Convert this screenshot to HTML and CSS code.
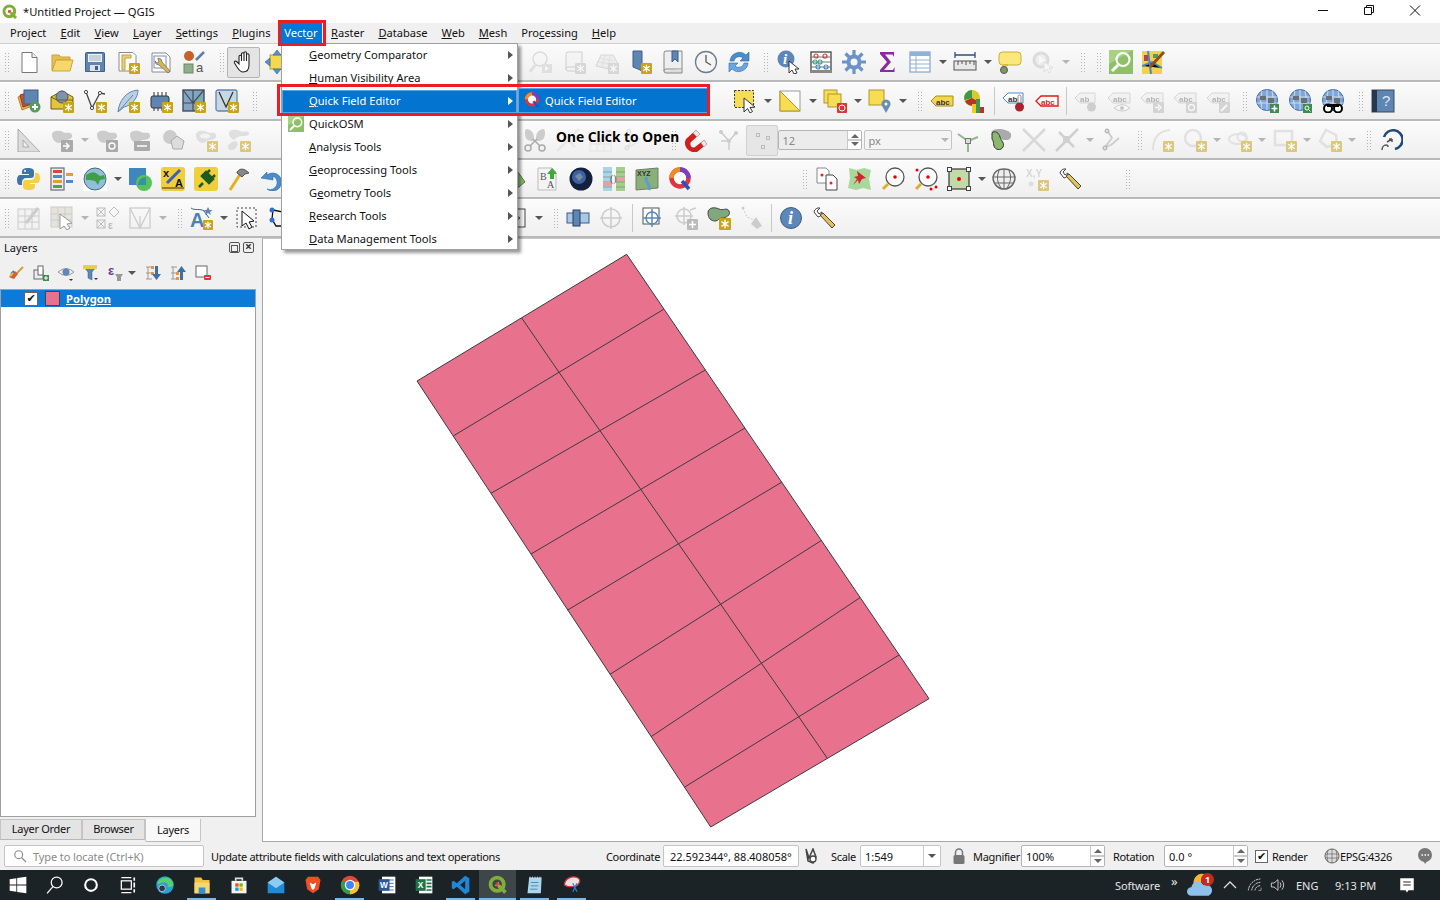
FILE: index.html
```html
<!DOCTYPE html>
<html lang="en">
<head>
    <meta charset="UTF-8">
    <title>*Untitled Project — QGIS</title>
    <link rel="stylesheet" href="styles.css">
</head>
<body>
<!-- icon sprite -->
<svg class="sprite" xmlns="http://www.w3.org/2000/svg">
    <symbol id="bdg" viewBox="0 0 10 10"><rect width="10" height="10" rx="1" fill="#c9a31a"/><path d="M5 1.5v7M2 3l6 4M8 3l-6 4" stroke="#fff" stroke-width="1.2"/></symbol>
    <symbol id="qgis" viewBox="0 0 24 24"><circle cx="11" cy="11" r="8" fill="none" stroke="#7fae3c" stroke-width="4.5"/><path d="M13 13l8 8" stroke="#7fae3c" stroke-width="4.5"/><path d="M8 13l5-5 1 6z" fill="#e8a33d"/><circle cx="11" cy="11" r="2" fill="#d9482b"/></symbol>

    <symbol id="page" viewBox="0 0 24 24"><path d="M5 2.5h10l5 5v15H5z" fill="#fff" stroke="#777"/><path d="M15 2.5v5h5" fill="#eee" stroke="#777"/></symbol>
    <symbol id="folder" viewBox="0 0 24 24"><path d="M2 20V5h7l2 2h9v3H7z" fill="#e6c04e" stroke="#c9a33a"/><path d="M2 21l4-11h17l-3 11z" fill="#f5d76a" stroke="#c9a33a"/></symbol>
    <symbol id="save" viewBox="0 0 24 24"><path d="M2.5 3.5a1 1 0 0 1 1-1h17a1 1 0 0 1 1 1v18h-19z" fill="#5f86b3" stroke="#3d5f88"/><rect x="5" y="4" width="14" height="8" fill="#eef1f4"/><path d="M6 6h12M6 8h12M6 10h12" stroke="#9fb0c2"/><rect x="7" y="15" width="10" height="6" fill="#dfe3e8"/><rect x="12" y="16" width="3" height="4" fill="#3d5f88"/></symbol>
    <symbol id="saveas" viewBox="0 0 24 24"><path d="M3 2.500h14l3 3V21H3z" fill="#fff" stroke="#8a8a8a"/><path d="M6 5h9v3H9v12H6z" fill="#e9cf7e" stroke="#c4a23d"/><use href="#bdg" x="13" y="13" width="11" height="11"/></symbol>
    <symbol id="layoutm" viewBox="0 0 24 24"><path d="M3 3h14l4 4v15H3z" fill="#fff" stroke="#8a8a8a"/><rect x="5" y="6" width="12" height="12" fill="none" stroke="#6f8fc0"/><path d="M9 8l3 1 1 3 8 9-2 2-9-8-3-1-1-3 2 2 2-1-1-3z" fill="#d9b64c" stroke="#666" stroke-width=".7"/></symbol>
    <symbol id="styleman" viewBox="0 0 24 24"><circle cx="7" cy="6" r="5" fill="#c8602a"/><path d="M14 10L22 2" stroke="#5a7fa8" stroke-width="2.500"/><rect x="2" y="14" width="9" height="9" fill="#8fae8a" stroke="#6b8a66"/><text x="14" y="22" class="ia">a</text></symbol>
    <symbol id="hand" viewBox="0 0 24 24"><path d="M7 14V6.500a1.200 1.200 0 0 1 2.500 0V11 4a1.200 1.200 0 0 1 2.500 0v7-8a1.200 1.200 0 0 1 2.500 0v8-6a1.200 1.200 0 0 1 2.500 0v10c0 4-2 7-6 7-3 0-4-2-6-5l-2.500-4c-.7-1.500 1-2.500 2-1.500z" fill="#fff" stroke="#222" stroke-width="1.100"/></symbol>
    <symbol id="pansel" viewBox="0 0 24 24"><rect x="5" y="5" width="14" height="14" fill="#f2d94e" stroke="#b79e2a"/><path d="M12 0l4 5H8zM12 24l-4-5h8zM0 12l5-4v8zM24 12l-5 4V8z" fill="#5d8fc9" stroke="#36618f" stroke-width=".6"/></symbol>
    <symbol id="zoomlast" viewBox="0 0 24 24"><circle cx="11" cy="9" r="7" fill="#f4f4f4" stroke="#aaa" stroke-width="1.500"/><path d="M6 15l-5 7" stroke="#c9b98a" stroke-width="3"/><rect x="13" y="14" width="10" height="9" fill="#bbb"/><path d="M16 16l4 2.500-4 2.500z" fill="#fff"/></symbol>
    <symbol id="newmap" viewBox="0 0 24 24"><path d="M4 4a2 2 0 0 1 2-2h14v15H6a2 2 0 0 0-2 2z" fill="#eee" stroke="#888"/><path d="M4 19a2 2 0 0 0 2 2h8" fill="none" stroke="#888"/><use href="#bdg" x="13" y="13" width="11" height="11"/></symbol>
    <symbol id="map3d" viewBox="0 0 24 24"><path d="M1 16l5-11h12l5 9-9 5z" fill="#ddd" stroke="#999"/><path d="M5 8l13 3M3 12l14 2M10 5L7 17M15 5l-2 13" stroke="#aaa" stroke-width=".7"/><use href="#bdg" x="13" y="13" width="11" height="11"/></symbol>
    <symbol id="bmknew" viewBox="0 0 24 24"><path d="M5 1h9v15l4 4v3l-8-4-5-2z" fill="#5f86b3" stroke="#3d5f88"/><use href="#bdg" x="13" y="13" width="11" height="11"/></symbol>
    <symbol id="bmkshow" viewBox="0 0 24 24"><path d="M3 3a2 2 0 0 1 2-2h16v18H5a2 2 0 0 0-2 2z" fill="#eee" stroke="#888"/><path d="M3 21a2 2 0 0 0 2 2h16v-4" fill="#ddd" stroke="#888"/><path d="M11 1h6v11l-3-3-3 3z" fill="#5f86b3" stroke="#3d5f88"/></symbol>
    <symbol id="clock" viewBox="0 0 24 24"><circle cx="12" cy="12" r="10.500" fill="#f4f4f4" stroke="#6c7c8c" stroke-width="1.300"/><path d="M12 5v7l5 3" fill="none" stroke="#555" stroke-width="1.300"/></symbol>
    <symbol id="refresh" viewBox="0 0 24 24"><path d="M3 11a9.500 9.500 0 0 1 16-6l3-3v9h-9l3-3a5.500 5.500 0 0 0-9 3z" fill="#4a8ccc" stroke="#2d69a5" stroke-width=".6"/><path d="M21 13a9.500 9.500 0 0 1-16 6l-3 3v-9h9l-3 3a5.500 5.500 0 0 0 9-3z" fill="#6aa7df" stroke="#2d69a5" stroke-width=".6"/></symbol>
    <symbol id="identify" viewBox="0 0 24 24"><circle cx="10" cy="9" r="8.500" fill="#5c87b8"/><text x="7" y="14" class="ii">i</text><path d="M13 11v12l3-3 2 4 3-1-2-4h4z" fill="#fff" stroke="#222" stroke-width=".9"/></symbol>
    <symbol id="abacus" viewBox="0 0 24 24"><rect x="2" y="2" width="20" height="19" fill="#fff" stroke="#444" stroke-width="1.300"/><rect x="1" y="20" width="22" height="3" fill="#888"/><path d="M2 7h20M2 12h20M2 17h20" stroke="#777"/><g fill="none" stroke-width="1.200"><circle cx="7" cy="6" r="2" stroke="#c44"/><circle cx="16" cy="6" r="2" stroke="#c44"/><circle cx="11" cy="12" r="2" stroke="#3a8"/><circle cx="6" cy="12" r="2" stroke="#3a8"/><circle cx="9" cy="17" r="2" stroke="#48c"/><circle cx="17" cy="17" r="2" stroke="#48c"/></g></symbol>
    <symbol id="gear" viewBox="0 0 24 24"><circle cx="12" cy="12" r="5.500" fill="none" stroke="#6c93c9" stroke-width="4"/><path d="M12 0v6M12 18v6M0 12h6M18 12h6M3.500 3.500l4 4M16.500 16.500l4 4M20.500 3.500l-4 4M7.500 16.500l-4 4" stroke="#6c93c9" stroke-width="3.200"/></symbol>
    <symbol id="sigma" viewBox="0 0 24 24"><path d="M5 2h14v5l-1.500-2.500H10l6 7.500-7 8h9l1.500-3v5H5v-2l7-8-7-8z" fill="#8a2a9e"/></symbol>
    <symbol id="table" viewBox="0 0 24 24"><rect x="2" y="2" width="20" height="20" fill="#fff" stroke="#6a93c0"/><rect x="2" y="2" width="20" height="4" fill="#8fb2d6"/><path d="M2 10h20M2 14h20M2 18h20M8 6v16" stroke="#8fb2d6"/></symbol>
    <symbol id="ruler" viewBox="0 0 24 24"><path d="M2 5h20M2 2v6M22 2v6" stroke="#2f4f78" stroke-width="1.300"/><rect x="1" y="11" width="22" height="9" fill="#e8e8e8" stroke="#555"/><path d="M5 11v4M9 11v3M13 11v4M17 11v3M21 11v4" stroke="#555"/></symbol>
    <symbol id="note" viewBox="0 0 24 24"><rect x="1" y="2" width="22" height="13" rx="3.500" fill="#fbe87a" stroke="#c7ae3a"/><path d="M5 15l-1 4 6-4z" fill="#fbe87a" stroke="#c7ae3a"/><circle cx="6" cy="20" r="3.500" fill="#7e9a5a" stroke="#556"/></symbol>
    <symbol id="playgear" viewBox="0 0 24 24"><circle cx="10" cy="10" r="7" fill="#ddd" stroke="#aaa" stroke-width="3"/><path d="M8 6l6 4-6 4z" fill="#fff"/><path d="M13 12v10l3-3 2 4 2-1-2-4h4z" fill="#fff" stroke="#bbb"/></symbol>
    <symbol id="osm" viewBox="0 0 24 24"><rect width="24" height="24" fill="#8fc067"/><path d="M24 0H0v14z" fill="#a6d283"/><circle cx="14" cy="9.500" r="6.500" fill="none" stroke="#fff" stroke-width="2.200"/><path d="M9 15l-6 6" stroke="#fff" stroke-width="3"/></symbol>
    <symbol id="mapedit" viewBox="0 0 24 24"><rect y="1" width="20" height="23" fill="#f2d24b"/><path d="M0 16l10-4 10 6M6 1l3 23" stroke="#4a86c8" stroke-width="2"/><rect x="2" y="5" width="4" height="6" fill="#b0455a"/><rect x="11" y="4" width="5" height="4" fill="#5a9a5a"/><path d="M8 17L22 2" stroke="#9a4a20" stroke-width="3"/></symbol>

    <symbol id="dsm" viewBox="0 0 24 24"><path d="M1 8l11-4 3 13-10 4z" fill="#e8b24c" stroke="#b9822a"/><path d="M3 6l10-3 2 12-9 3z" fill="#c4553a" stroke="#96371f"/><rect x="7" y="1" width="14" height="14" fill="#5f86b3" stroke="#3d5f88"/><circle cx="18" cy="18" r="5.500" fill="#5a9a5a"/><path d="M18 15v6M15 18h6" stroke="#fff" stroke-width="2"/></symbol>
    <symbol id="gpkg" viewBox="0 0 24 24"><path d="M1 8l11-6 11 6v12H1z" fill="#e3c53c" stroke="#6e5f14"/><circle cx="12" cy="8" r="6" fill="#7d93ad" stroke="#556"/><path d="M1 8l6 3h16" fill="none" stroke="#6e5f14"/><use href="#bdg" x="13" y="13" width="11" height="11"/></symbol>
    <symbol id="vnew" viewBox="0 0 24 24"><path d="M3 3l6 16 8-15 5 1" fill="none" stroke="#444" stroke-width="1.300"/><g fill="#fff" stroke="#444"><circle cx="3" cy="3" r="1.600"/><circle cx="9" cy="19" r="1.600"/><circle cx="17" cy="4" r="1.600"/></g><use href="#bdg" x="13" y="13" width="11" height="11"/></symbol>
    <symbol id="feather" viewBox="0 0 24 24"><path d="M2 23C3 12 10 2 22 1c0 7-5 15-14 17z" fill="#bcd0e4" stroke="#5f86b3"/><path d="M2 23L17 6" stroke="#5f86b3"/><use href="#bdg" x="13" y="13" width="11" height="11"/></symbol>
    <symbol id="chip" viewBox="0 0 24 24"><rect x="2" y="7" width="18" height="12" rx="2" fill="#5f86b3" stroke="#333"/><path d="M5 3v4M9 3v4M13 3v4M17 3v4M5 19v3M9 19v3M13 19v3" stroke="#333"/><use href="#bdg" x="13" y="13" width="11" height="11"/></symbol>
    <symbol id="mesh" viewBox="0 0 24 24"><rect x="1" y="1" width="21" height="21" fill="#86a3bf" stroke="#3f4f60" stroke-width="1.400"/><path d="M1 14h21M11 14V1M11 14v8M1 1l10 13 11-13" fill="none" stroke="#3f4f60" stroke-width="1.200"/><use href="#bdg" x="13" y="13" width="11" height="11"/></symbol>
    <symbol id="meshv" viewBox="0 0 24 24"><rect x="1" y="1" width="21" height="21" rx="2" fill="#c9d6e3" stroke="#5f86b3" stroke-width="1.300"/><path d="M4 3l7 15 7-15" fill="none" stroke="#333" stroke-width="1.300"/><use href="#bdg" x="13" y="13" width="11" height="11"/></symbol>
    <symbol id="selbox" viewBox="0 0 24 24"><rect x="1.500" y="1.500" width="19" height="17" fill="#f6dd52" stroke="#333" stroke-dasharray="2 1.500"/><path d="M11 9v14l3.500-3.500 2.500 4.500 2.500-1.500-2.500-4 5-.5z" fill="#fff" stroke="#333"/></symbol>
    <symbol id="seldiag" viewBox="0 0 24 24"><rect x="2" y="2" width="20" height="20" fill="#fff" stroke="#999"/><path d="M2 2l20 20H2z" fill="#f6dd52" stroke="#b0962a"/></symbol>
    <symbol id="seldel" viewBox="0 0 24 24"><rect x="1" y="1" width="13" height="13" fill="#f6dd52" stroke="#b0962a"/><rect x="5" y="5" width="13" height="13" fill="#f6dd52" stroke="#b0962a"/><rect x="14" y="14" width="10" height="10" rx="1" fill="#d33"/><circle cx="19" cy="19" r="3" fill="none" stroke="#fff"/></symbol>
    <symbol id="selpin" viewBox="0 0 24 24"><rect x="1" y="1" width="15" height="15" fill="#f6dd52" stroke="#b0962a"/><path d="M18 24l-4-7a4.500 4.500 0 1 1 8 0z" fill="#6a8fb5"/><circle cx="18" cy="15" r="1.500" fill="#fff"/></symbol>
    <symbol id="abc" viewBox="0 0 24 24"><path d="M1 12l5-5h17v10H6z" fill="#f2d74b" stroke="#a68d1a"/><text x="6" y="15.500" class="il">abc</text></symbol>
    <symbol id="chart" viewBox="0 0 24 24"><circle cx="9" cy="9" r="8" fill="#d9c92c"/><path d="M9 9V1a8 8 0 0 0-7.500 10z" fill="#3a9a4a"/><path d="M9 9l-7 3a8 8 0 0 0 14 1z" fill="#b5332b"/><rect x="9" y="15" width="4" height="9" fill="#f2c92c"/><rect x="13" y="10" width="4" height="14" fill="#3a9a4a"/><rect x="17" y="18" width="4" height="6" fill="#b5332b"/></symbol>
    <symbol id="abred" viewBox="0 0 24 24"><path d="M1 9l5-5h15v10H6z" fill="#fff" stroke="#4a8ccc"/><text x="6" y="12.500" class="il">ab</text><rect x="16" y="6" width="3" height="10" rx="1.500" fill="#fff" stroke="#888"/><circle cx="17.500" cy="18" r="4.500" fill="#a8232b"/></symbol>
    <symbol id="abcred" viewBox="0 0 24 24"><path d="M1 12l5-5h17v10H6z" fill="#fff" stroke="#e01818" stroke-width="1.300"/><text x="6" y="15.500" class="il ir">abc</text></symbol>
    <symbol id="abg" viewBox="0 0 24 24"><path d="M1 9l5-5h15v10H6z" fill="#e8e8e8" stroke="#999"/><text x="6" y="12.500" class="il">ab</text><circle cx="17.500" cy="18" r="4.500" fill="#888"/></symbol>
    <symbol id="abceye" viewBox="0 0 24 24"><path d="M1 9l5-5h17v10H6z" fill="#e8e8e8" stroke="#999"/><text x="6" y="12.500" class="il">abc</text><path d="M7 19q8-7 16 0q-8 6-16 0z" fill="#fff" stroke="#888"/><circle cx="15" cy="19" r="2" fill="#777"/></symbol>
    <symbol id="abcmove" viewBox="0 0 24 24"><path d="M1 9l5-5h17v10H6z" fill="#e8e8e8" stroke="#999"/><text x="6" y="12.500" class="il">abc</text><rect x="13" y="13" width="11" height="11" rx="1" fill="#999"/><path d="M15 18.500h4M18 15.500l3 3-3 3" stroke="#fff" stroke-width="1.500" fill="none"/></symbol>
    <symbol id="abcrot" viewBox="0 0 24 24"><path d="M1 9l5-5h17v10H6z" fill="#e8e8e8" stroke="#999"/><text x="6" y="12.500" class="il">abc</text><rect x="13" y="13" width="11" height="11" rx="1" fill="#999"/><circle cx="18.500" cy="18.500" r="3" fill="none" stroke="#fff" stroke-width="1.300"/></symbol>
    <symbol id="abcedit" viewBox="0 0 24 24"><path d="M1 9l5-5h17v10H6z" fill="#e8e8e8" stroke="#999"/><text x="6" y="12.500" class="il">abc</text><rect x="13" y="13" width="11" height="11" rx="1" fill="#999"/><path d="M15 22l6-6" stroke="#fff" stroke-width="2"/></symbol>
    <symbol id="globe" viewBox="0 0 24 24"><circle cx="12" cy="11" r="10.500" fill="#7ea7d8" stroke="#3f6aa3"/><path d="M2 8h20M2 14h20M12 .500v21M7 2q-3 9 0 18M17 2q3 9 0 18" fill="none" stroke="#dfe9f5" stroke-width=".8"/><path d="M5 7h6v4H5zM13 9h6v5h-6z" fill="#6a6f75"/></symbol>
    <symbol id="globep" viewBox="0 0 24 24"><use href="#globe" width="24" height="24"/><rect x="15" y="15" width="9" height="9" fill="#3f8a4f"/><path d="M19.500 16.500v6M16.500 19.500h6" stroke="#fff" stroke-width="1.600"/></symbol>
    <symbol id="globez" viewBox="0 0 24 24"><use href="#globe" width="24" height="24"/><rect x="15" y="15" width="9" height="9" fill="#3f8a4f"/><circle cx="19" cy="19" r="2" fill="none" stroke="#fff"/><path d="M20.500 20.500l2 2" stroke="#fff"/></symbol>
    <symbol id="globeb" viewBox="0 0 24 24"><use href="#globe" width="24" height="24"/><circle cx="7" cy="19.500" r="4" fill="#fff" stroke="#000" stroke-width="2"/><circle cx="17" cy="19.500" r="4" fill="#fff" stroke="#000" stroke-width="2"/><path d="M6 15h12v3H6z"/></symbol>
    <symbol id="help" viewBox="0 0 24 24"><rect x="1" y="1" width="22" height="22" fill="#5f86b3" stroke="#3a4a5a"/><rect x="1" y="1" width="5" height="22" fill="#26384e"/><text x="11" y="17" class="iq">?</text></symbol>

    <symbol id="setsq" viewBox="0 0 24 24"><path d="M1 1l22 23H1z" fill="#ddd" stroke="#aaa"/><path d="M6 12l6 7H6z" fill="#f0f0f0" stroke="#aaa"/></symbol>
    <symbol id="blob" viewBox="0 0 24 24"><path d="M2 7c0-5 8-5 11-3s8-1 9 3-4 5-7 5-3 3-6 3-7-3-7-8z" fill="#ccc"/></symbol>
    <symbol id="bloba" viewBox="0 0 24 24"><use href="#blob" width="24" height="24"/><rect x="11" y="12" width="12" height="12" rx="1" fill="#aaa"/><path d="M13 18h5M16 15l3 3-3 3" stroke="#fff" stroke-width="1.500" fill="none"/></symbol>
    <symbol id="blobr" viewBox="0 0 24 24"><use href="#blob" width="24" height="24"/><rect x="11" y="12" width="12" height="12" rx="1" fill="#aaa"/><circle cx="17" cy="18" r="3" fill="none" stroke="#fff" stroke-width="1.300"/></symbol>
    <symbol id="blobl" viewBox="0 0 24 24"><use href="#blob" width="24" height="24"/><rect x="6" y="13" width="16" height="10" rx="1" fill="#aaa"/><path d="M9 18h10" stroke="#fff" stroke-width="1.500"/></symbol>
    <symbol id="blobh" viewBox="0 0 24 24"><circle cx="9" cy="9" r="7" fill="#ccc"/><path d="M16 8l7 5-2 8h-9l-2-8z" fill="#ddd" stroke="#aaa"/></symbol>
    <symbol id="blobb" viewBox="0 0 24 24"><use href="#blob" width="24" height="24"/><ellipse cx="11" cy="8" rx="5" ry="2.500" fill="#f0f0f0"/><use href="#bdg" x="13" y="13" width="11" height="11"/></symbol>
    <symbol id="blobt" viewBox="0 0 24 24"><path d="M2 5c0-4 8-4 11-2s8-1 9 2-5 3-7 3-5 1-7 3-6-2-6-6z" fill="#ccc"/><path d="M1 19c0-4 7-7 9-5s-1 8-5 8-4-1-4-3z" fill="#ccc"/><use href="#bdg" x="13" y="13" width="11" height="11"/></symbol>
    <symbol id="sciss" viewBox="0 0 24 24"><path d="M3 1c5 0 8 4 8 9s-3 3-6 2-4-8-2-11zM21 1c-5 0-8 4-8 9s3 3 6 2 4-8 2-11z" fill="#ccc"/><path d="M10 11l7 7M14 11l-7 7" stroke="#aaa" stroke-width="1.500"/><circle cx="5" cy="20" r="3" fill="none" stroke="#aaa" stroke-width="1.500"/><circle cx="19" cy="20" r="3" fill="none" stroke="#aaa" stroke-width="1.500"/></symbol>
    <symbol id="magnet" viewBox="0 0 24 24"><path d="M2 11L12 2l4 4-9 8c-2 3 1 7 4 5l9-7 3 4-10 8C6 26-2 18 2 11z" fill="#d01f1f"/><path d="M12 2l4 4-3 3-4-4zM20 12l3 4-3 3-3-4z" fill="#e9e9e9" stroke="#999" stroke-width=".5"/></symbol>
    <symbol id="tnode" viewBox="0 0 24 24"><path d="M4 4l8 9 7-8M12 13v9M4 13h8" fill="none" stroke="#ccc" stroke-width="1.500"/><circle cx="4" cy="4" r="2" fill="#ccc"/><circle cx="19" cy="5" r="2" fill="#ccc"/><circle cx="12" cy="13" r="2" fill="#ccc"/></symbol>
    <symbol id="split" viewBox="0 0 24 24"><path d="M2 6l10 7 10-4M12 13v11" stroke="#8fbb8f" stroke-width="2" fill="none"/><rect x="9.500" y="10.500" width="5" height="5" fill="#ddd" stroke="#777"/></symbol>
    <symbol id="blobg" viewBox="0 0 24 24"><path d="M2 4c4-4 10-3 14-2s7 3 6 7-6 3-8 3z" fill="#aaa"/><path d="M3 5c3-3 7 0 8 4s5 6 3 10-8 3-9-1 0-4-2-7z" fill="#8cb86d" stroke="#333"/></symbol>
    <symbol id="xc" viewBox="0 0 24 24"><path d="M1 1l22 22M23 1L1 23" stroke="#d8d8d8" stroke-width="2.500"/></symbol>
    <symbol id="xc2" viewBox="0 0 24 24"><path d="M1 23L23 1M4 4l15 15" stroke="#d0d0d0" stroke-width="2.500"/><path d="M8 8l7 0 0 7-7 0z" fill="#d0d0d0"/></symbol>
    <symbol id="nodes" viewBox="0 0 24 24"><path d="M7 2l5 8-7 9 6-2 8-7" fill="none" stroke="#ccc" stroke-width="1.800"/><circle cx="7" cy="3" r="2" fill="#ddd" stroke="#aaa"/><circle cx="5" cy="20" r="2" fill="#ddd" stroke="#aaa"/></symbol>
    <symbol id="arc" viewBox="0 0 24 24"><path d="M3 22C3 10 9 3 20 2" fill="none" stroke="#d0d0d0" stroke-width="2"/><use href="#bdg" x="13" y="13" width="11" height="11"/></symbol>
    <symbol id="circ" viewBox="0 0 24 24"><circle cx="10" cy="10" r="8" fill="none" stroke="#d0d0d0" stroke-width="2.500"/><use href="#bdg" x="13" y="13" width="11" height="11"/></symbol>
    <symbol id="ell" viewBox="0 0 24 24"><ellipse cx="10" cy="11" rx="9" ry="5" fill="none" stroke="#d0d0d0" stroke-width="2"/><circle cx="14" cy="9" r="4.500" fill="none" stroke="#d0d0d0" stroke-width="2"/><use href="#bdg" x="13" y="13" width="11" height="11"/></symbol>
    <symbol id="rc" viewBox="0 0 24 24"><rect x="2" y="3" width="17" height="14" fill="none" stroke="#d0d0d0" stroke-width="2.500"/><use href="#bdg" x="13" y="13" width="11" height="11"/></symbol>
    <symbol id="pl" viewBox="0 0 24 24"><path d="M8 2l10 5 1 9-10 3-7-6z" fill="none" stroke="#d0d0d0" stroke-width="2.500"/><use href="#bdg" x="13" y="13" width="11" height="11"/></symbol>
    <symbol id="trace" viewBox="0 0 24 24"><path d="M5 9a9.500 9.500 0 1 1 11 12" fill="none" stroke="#1f4a7d" stroke-width="2.600"/><path d="M3 22c0-3 2-5 4-5s2 1 2 2M8 14l5-3M13 11h-3M13 11v3" fill="none" stroke="#555" stroke-width="1.500"/></symbol>

    <symbol id="python" viewBox="0 0 24 24"><path d="M11 1c-4 0-6 1-6 4v2h7v1H3c-2 0-3 2-3 5s1 5 3 5h2v-3c0-2 2-4 4-4h5c2 0 3-1 3-3V5c0-3-2-4-6-4z" fill="#3d75a8"/><path d="M12 23c4 0 6-1 6-4v-2h-5v-1h7c2 0 3-2 3-5s-1-5-3-5h-2v3c0 2-2 4-4 4H9c-2 0-3 1-3 3v3c0 3 2 4 6 4z" fill="#f5cf47"/><circle cx="8" cy="4" r="1" fill="#fff"/></symbol>
    <symbol id="proc" viewBox="0 0 24 24"><rect x="1" y="1" width="13" height="22" fill="#eee" stroke="#6a7a8a" stroke-width="1.300"/><rect x="3" y="3" width="9" height="3" fill="#d14a4a"/><rect x="3" y="8" width="9" height="3" fill="#4a8ccc"/><rect x="3" y="13" width="9" height="3" fill="#e0a030"/><rect x="3" y="18" width="9" height="3" fill="#4aa35a"/><rect x="16" y="6" width="7" height="3" fill="#e0a030"/><rect x="16" y="13" width="7" height="3" fill="#4a8ccc"/></symbol>
    <symbol id="earth" viewBox="0 0 24 24"><rect width="24" height="24" fill="#fff"/><circle cx="12" cy="12" r="11" fill="#8fc0d8" stroke="#4a6a7a"/><path d="M3 8q6-4 10-2l4 3 4-1 1 4-5 1-2 5-3-4-5-1-4 0z" fill="#3f9e4a"/></symbol>
    <symbol id="overlay" viewBox="0 0 24 24"><rect x="1" y="1" width="17" height="17" fill="#3f86bd"/><circle cx="16" cy="16" r="8" fill="#56c25a"/><path d="M18 10v8h-8a8 8 0 0 1 8-8z" fill="#3a8fa0"/></symbol>
    <symbol id="xa" viewBox="0 0 24 24"><rect width="24" height="24" rx="3" fill="#f0cf3a"/><text x="2" y="10" class="ib">x</text><text x="14" y="20" class="ib">A</text><path d="M6 16L19 3" stroke="#3a5fb5" stroke-width="3"/><path d="M1 21h22" stroke="#333"/></symbol>
    <symbol id="plugin" viewBox="0 0 24 24"><rect width="24" height="24" rx="3" fill="#f0cf3a"/><path d="M5 20l4-4M8 9l7 7 4-4-7-7zM13 6l3-3M18 11l3-3" stroke="#1f5a1f" stroke-width="2.500" fill="#1f5a1f"/></symbol>
    <symbol id="hammer" viewBox="0 0 24 24"><path d="M3 23L14 6" stroke="#e8b020" stroke-width="3"/><path d="M10 5c3-4 7-4 12 1l-4 1-3 3-5-4z" fill="#888" stroke="#555"/></symbol>
    <symbol id="undo" viewBox="0 0 24 24"><path d="M1 11L7 5v3a9 9 0 1 1 0 14 7 7 0 0 0 6-13v4z" fill="#4a8ccc" stroke="#2d69a5" stroke-width=".6"/></symbol>
    <symbol id="lgreen" viewBox="0 0 24 24"><path d="M2 5l10-4 10 14-10 8z" fill="#8cb86d" stroke="#557a3a"/></symbol>
    <symbol id="transl" viewBox="0 0 24 24"><path d="M2 1h14l4 4v18H2z" fill="#f4f4f4" stroke="#bbb"/><text x="4" y="13" class="it">B</text><text x="11" y="21" class="it">A</text><path d="M16 1l5 6h-3v5h-4V7h-3z" fill="#3faa3a"/></symbol>
    <symbol id="dglobe" viewBox="0 0 24 24"><circle cx="12" cy="12" r="11.500" fill="#14203c"/><circle cx="10" cy="10" r="7" fill="#3a63a5"/><path d="M6 9l5-3 3 4-4 4z" fill="#7a8a9a"/></symbol>
    <symbol id="colm" viewBox="0 0 24 24"><rect x="1" width="9" height="24" fill="#a8d6e8"/><rect x="14" width="9" height="24" fill="#a4cf8a"/><path d="M1 5h9M1 10h9M1 15h9M1 20h9M14 5h9M14 10h9M14 15h9M14 20h9" stroke="#777" stroke-width=".6"/><rect x="1" y="15" width="9" height="4" fill="#e6a0a0"/><rect x="14" y="10" width="9" height="4" fill="#e6a0a0"/><text x="8" y="15" class="it">()</text></symbol>
    <symbol id="xyz" viewBox="0 0 24 24"><path d="M1 3l22-2v20L1 23z" fill="#8ab07a" stroke="#6f7f5f"/><path d="M12 10c-4 4 4 6 2 13" stroke="#5a9ed0" stroke-width="3" fill="none"/><text x="2" y="9" class="ix">XYZ</text></symbol>
    <symbol id="qfe" viewBox="0 0 24 24"><circle cx="12" cy="11" r="8.500" fill="#fff" stroke="#e0343f" stroke-width="4.500"/><path d="M12 2.500a8.500 8.500 0 0 1 8.500 8.500" fill="none" stroke="#7a3fc0" stroke-width="4.500"/><path d="M3.500 11a8.500 8.500 0 0 1 8.500-8.500" fill="none" stroke="#f08a24" stroke-width="4.500"/><path d="M14 14l7 8" stroke="#2a4fc0" stroke-width="3.500"/></symbol>
    <symbol id="pages" viewBox="0 0 24 24"><path d="M2 1h9l3 3v12H2z" fill="#fff" stroke="#888"/><path d="M11 8h7l4 4v11H11z" fill="#fff" stroke="#444"/><circle cx="7" cy="8" r="1.500" fill="#e22"/><circle cx="16" cy="16" r="1.500" fill="#e22"/></symbol>
    <symbol id="pinmap" viewBox="0 0 24 24"><path d="M1 1l8 2 7-2 7 2-2 9 2 11-8-2-7 2-8-2 2-10z" fill="#a8d89a"/><path d="M9 4l9 7-4 1-3 5-1-4-5 5 4-6-3-2 4-1z" fill="#d4232b"/></symbol>
    <symbol id="zd" viewBox="0 0 24 24"><circle cx="14" cy="10" r="9" fill="#fff" stroke="#555" stroke-width="1.300"/><circle cx="14" cy="10" r="1.800" fill="#e00"/><path d="M7 17l-5 5" stroke="#d9b030" stroke-width="3"/></symbol>
    <symbol id="zds" viewBox="0 0 24 24"><use href="#zd" width="24" height="24"/><g fill="#e00"><circle cx="3" cy="3" r="1.500"/><circle cx="22" cy="20" r="1.500"/><circle cx="17" cy="22" r="1.500"/></g></symbol>
    <symbol id="boxd" viewBox="0 0 24 24"><rect x="2" y="2" width="20" height="20" fill="#c2d9a8" stroke="#444" stroke-width="1.300"/><g fill="#fff" stroke="#444"><rect x=".500" y=".500" width="4" height="4"/><rect x="19.500" y=".500" width="4" height="4"/><rect x=".500" y="19.500" width="4" height="4"/><rect x="19.500" y="19.500" width="4" height="4"/></g><circle cx="12" cy="12" r="2" fill="#e00"/></symbol>
    <symbol id="wglobe" viewBox="0 0 24 24"><path d="M1 10C2 5 6 2 12 2s10 3 11 8c0 7-5 12-11 12S1 17 1 10z" fill="#eee" stroke="#666" stroke-width="1.500"/><path d="M1 10h22M3 16h18M7 3.500q-4 9 2 17.500M17 3.500q4 9-2 17.500M12 2v20" fill="none" stroke="#666"/></symbol>
    <symbol id="xy" viewBox="0 0 24 24"><text x="1" y="10" class="iy">X,Y</text><circle cx="6" cy="17" r="2.500" fill="#ccc"/><use href="#bdg" x="13" y="13" width="11" height="11"/></symbol>
    <symbol id="wrench" viewBox="0 0 24 24"><path d="M2 6a5 5 0 0 1 6-4L5 5l2 3 3-2a5 5 0 0 1-4 5z" fill="#fff" stroke="#444"/><path d="M8 9l3-2 12 12-3 3z" fill="#e3c25a" stroke="#444"/></symbol>

    <symbol id="grid" viewBox="0 0 24 24"><rect x="1" y="3" width="21" height="20" fill="#f2f2f2" stroke="#ccc"/><path d="M1 10h21M1 16h21M8 3v20M15 3v20" stroke="#ccc"/><path d="M9 17L21 2" stroke="#ccc" stroke-width="3"/></symbol>
    <symbol id="gsel" viewBox="0 0 24 24"><rect x="1" y="1" width="21" height="20" fill="#e4e4dc" stroke="#ccc"/><path d="M1 8h21M1 14h21M8 1v20M15 1v20" stroke="#ccc"/><path d="M10 8v15l4-3 3 4 3-2-3-4 5-1z" fill="#fff" stroke="#999"/></symbol>
    <symbol id="crosse" viewBox="0 0 24 24"><g fill="none" stroke="#bbb"><rect x="2" y="2" width="8" height="8"/><rect x="2" y="14" width="8" height="8"/><path d="M2 2l8 8M10 2l-8 8M2 14l8 8M10 14l-8 8M14 6l5-5 5 5-5 5z"/></g><text x="13" y="23" class="iy">ε</text></symbol>
    <symbol id="gmesh" viewBox="0 0 24 24"><rect x="2" y="2" width="20" height="20" fill="none" stroke="#ccc" stroke-width="1.300"/><path d="M2 2l10 20L22 2M12 22V10" fill="none" stroke="#ccc" stroke-width="1.300"/></symbol>
    <symbol id="labela" viewBox="0 0 24 24"><path d="M1 2c4 3 9 0 13 3l5 7" fill="none" stroke="#3d5f88"/><text x="0" y="21" class="ia2">A</text><path d="M18 1l1.500 3h3l-2.500 2 1 3-3-2-3 2 1-3-2.500-2h3z" fill="#5f86b3"/><use href="#bdg" x="13" y="14" width="10" height="10"/></symbol>
    <symbol id="curs" viewBox="0 0 24 24"><rect x="2" y="2" width="19" height="19" fill="none" stroke="#444" stroke-dasharray="2 2"/><path d="M7 5v15l4-3 3 6 3-2-3-5 5-1z" fill="#fff" stroke="#111"/></symbol>
    <symbol id="nbox" viewBox="0 0 24 24"><path d="M5 4l15 3 1 13H8L4 13z" fill="none" stroke="#111" stroke-width="1.300"/><g fill="#2f6fd4"><circle cx="4" cy="4" r="2.500"/><circle cx="4" cy="14" r="2.500"/><circle cx="20" cy="20" r="2.500"/></g></symbol>
    <symbol id="boxel" viewBox="0 0 24 24"><rect x="4" y="3" width="16" height="18" fill="#f4f4f4" stroke="#444"/><path d="M9 8l6 4-6 4" fill="none" stroke="#444"/></symbol>
    <symbol id="bar" viewBox="0 0 24 24"><rect x="1" y="7" width="22" height="10" fill="#a9c8e6" stroke="#3d5f88"/><rect x="7" y="4" width="7" height="16" fill="#5f86b3" stroke="#24405f"/></symbol>
    <symbol id="xhair" viewBox="0 0 24 24"><circle cx="12" cy="12" r="9" fill="none" stroke="#ccc" stroke-width="1.500"/><path d="M12 1v22M1 12h22" stroke="#ccc" stroke-width="1.500"/></symbol>
    <symbol id="xhaird" viewBox="0 0 24 24"><rect x="2" y="2" width="16" height="16" fill="#fff" stroke="#555"/><circle cx="11" cy="12" r="6" fill="none" stroke="#5a86bd" stroke-width="1.500"/><path d="M11 3v18M2 12h18" stroke="#5a86bd" stroke-width="1.500"/></symbol>
    <symbol id="xhairp" viewBox="0 0 24 24"><circle cx="10" cy="10" r="7" fill="none" stroke="#ccc" stroke-width="1.500"/><path d="M10 1v18M1 10h18M16 4l6-2" stroke="#ccc" stroke-width="1.500"/><rect x="13" y="13" width="11" height="11" rx="1" fill="#bbb"/><path d="M18.500 15v7M15 18.500h7" stroke="#fff" stroke-width="1.600"/></symbol>
    <symbol id="bgreen" viewBox="0 0 24 24"><path d="M1 7c0-6 7-6 11-4s8-2 10 2-3 7-7 7-3 3-7 3-7-3-7-8z" fill="#80a87a" stroke="#445"/><use href="#bdg" x="12" y="12" width="12" height="12"/></symbol>
    <symbol id="pathd" viewBox="0 0 24 24"><path d="M3 2l4 9 10 4" fill="none" stroke="#ccc" stroke-dasharray="2 1.500"/><circle cx="3" cy="2" r="1.500" fill="#ccc"/><path d="M11 18l5-7 6 9-5 3z" fill="#ccc"/></symbol>
    <symbol id="info" viewBox="0 0 24 24"><circle cx="12" cy="12" r="10.500" fill="#5c87b8" stroke="#3d5f88"/><text x="9" y="18" class="ii2">i</text></symbol>

    <symbol id="broom" viewBox="0 0 16 16"><path d="M8 9l7-7" stroke="#c8a045" stroke-width="2"/><path d="M1 12l6-6 3 3-4 5-3-1z" fill="#d2603a"/><path d="M3 9l3-3" stroke="#3a7fc0" stroke-width="2"/><path d="M2 11l3-3" stroke="#e2c23a" stroke-width="2"/></symbol>
    <symbol id="addgrp" viewBox="0 0 16 16"><rect x="1" y="5" width="9" height="9" fill="#eee" stroke="#666"/><rect x="5" y="1" width="5" height="9" fill="#fff" stroke="#666"/><rect x="10" y="10" width="6" height="6" fill="#3f8a4f"/><path d="M13 11v4M11 13h4" stroke="#fff"/></symbol>
    <symbol id="eye" viewBox="0 0 16 16"><path d="M0 7q8-7 16 0q-8 7-16 0z" fill="#eee" stroke="#999"/><circle cx="8" cy="7" r="3.500" fill="#5c87b8"/><path d="M11 14h4l-2 2z" fill="#333"/></symbol>
    <symbol id="funnel" viewBox="0 0 16 16"><path d="M0 1h14l-5 6v8l-4-2V7z" fill="#5c87b8" stroke="#3d5f88" stroke-width=".5"/><path d="M0 1h14v3H0z" fill="#e8cc4a"/><path d="M11 13h4l-2 2z" fill="#333"/></symbol>
    <symbol id="expf" viewBox="0 0 16 16"><text x="0" y="10" class="ie">ε</text><path d="M7 9h8l-2 3v4H9v-4z" fill="#999"/></symbol>
    <symbol id="expd" viewBox="0 0 16 16"><path d="M1 2h6M1 8h6M1 14h6M3 2v12" stroke="#999" fill="none"/><rect x="6" y="1" width="3" height="3" fill="#e8963a"/><rect x="6" y="7" width="3" height="3" fill="#e8963a"/><path d="M10 1h3v8h3l-4.500 6L7 9h3z" fill="#3f6fa5"/></symbol>
    <symbol id="expu" viewBox="0 0 16 16"><path d="M1 2h6M1 8h6M1 14h6M3 2v12" stroke="#999" fill="none"/><rect x="6" y="7" width="3" height="3" fill="#e8963a"/><rect x="6" y="12" width="3" height="3" fill="#e8963a"/><path d="M10 15h3V7h3l-4.500-6L7 7h3z" fill="#3f6fa5"/></symbol>
    <symbol id="rmlyr" viewBox="0 0 16 16"><rect x="1" y="1" width="11" height="11" fill="#fff" stroke="#666"/><rect x="9" y="10" width="7" height="5" rx="1" fill="#e0343f"/><path d="M10.500 12.500h4" stroke="#fff"/></symbol>

    <symbol id="win" viewBox="0 0 24 24"><path d="M2 5l8-1.200v7.700H2zM11 3.600L22 2v9.500H11zM2 12.500h8v7.700L2 19zM11 12.500h11V22l-11-1.600z" fill="#fff"/></symbol>
    <symbol id="tsearch" viewBox="0 0 24 24"><circle cx="14" cy="9" r="6.500" fill="none" stroke="#fff" stroke-width="1.500"/><path d="M9.500 14l-7 8" stroke="#fff" stroke-width="1.500"/></symbol>
    <symbol id="cortana" viewBox="0 0 24 24"><circle cx="12" cy="12" r="7" fill="none" stroke="#fff" stroke-width="2.500"/></symbol>
    <symbol id="tview" viewBox="0 0 24 24"><path d="M4 3h12M4 21h12" stroke="#fff" stroke-width="1.500"/><rect x="4" y="7" width="12" height="10" fill="none" stroke="#fff" stroke-width="1.500"/><path d="M19.500 3v4M19.500 9v6M19.500 17v4" stroke="#fff" stroke-width="2"/></symbol>
    <symbol id="edge" viewBox="0 0 24 24"><circle cx="12" cy="12" r="10.500" fill="#2aa0d8"/><path d="M3 9c3-7 16-9 19 2 0 3-4 4-7 3 2-3-2-6-6-5s-6 4-6 0z" fill="#5ad06a"/><circle cx="8.500" cy="16" r="4" fill="#2a3a4a" stroke="#ccc"/></symbol>
    <symbol id="files" viewBox="0 0 24 24"><path d="M3 3h8l2 3h8v16H3z" fill="#f2c23c"/><rect x="3" y="9" width="18" height="13" fill="#f7d774"/><rect x="8" y="15" width="8" height="7" fill="#2f8fd8"/></symbol>
    <symbol id="store" viewBox="0 0 24 24"><path d="M3 7h18v15H3z" fill="#f4f4f4"/><path d="M8 7V4h8v3" fill="none" stroke="#ddd" stroke-width="2"/><rect x="7.500" y="10" width="4" height="4" fill="#f25022"/><rect x="12.500" y="10" width="4" height="4" fill="#7fba00"/><rect x="7.500" y="15" width="4" height="4" fill="#00a4ef"/><rect x="12.500" y="15" width="4" height="4" fill="#ffb900"/></symbol>
    <symbol id="mail" viewBox="0 0 24 24"><path d="M2 9l10-7 10 7v13H2z" fill="#1f8ad6"/><path d="M2 9l10 7 10-7-10-7z" fill="#8ecbf2"/></symbol>
    <symbol id="brave" viewBox="0 0 24 24"><path d="M6 2h12l3 4-2 11-7 5-7-5L3 6z" fill="#f04f24"/><path d="M8 9l4 2 4-2-2 7-2 2-2-2z" fill="#fff"/></symbol>
    <symbol id="chrome" viewBox="0 0 24 24"><circle cx="12" cy="12" r="11" fill="#e1483a"/><path d="M12 12L2.500 6.500A11 11 0 0 0 12 23z" fill="#2f9e50"/><path d="M12 12V23A11 11 0 0 0 22.500 8H12z" fill="#f6c42c"/><circle cx="12" cy="12" r="5.500" fill="#4285f4" stroke="#fff" stroke-width="1.500"/></symbol>
    <symbol id="word" viewBox="0 0 24 24"><rect x="6" y="2" width="16" height="20" fill="#fff"/><path d="M14 6h6M14 10h6M14 14h6M14 18h6" stroke="#2b579a"/><rect x="2" y="5" width="13" height="14" fill="#2b579a"/><text x="3.500" y="16" class="io">W</text></symbol>
    <symbol id="excel" viewBox="0 0 24 24"><rect x="6" y="2" width="16" height="20" fill="#fff"/><path d="M15 6h6M15 10h6M15 14h6M15 18h6" stroke="#217346" stroke-width="2"/><rect x="2" y="5" width="12" height="14" fill="#217346"/><text x="4.500" y="16" class="io">X</text></symbol>
    <symbol id="vscode" viewBox="0 0 24 24"><path d="M17 1l5 3v16l-5 3L7 14l-4 3-2-1V8l2-1 4 3zM17 7l-6 5 6 5z" fill="#1f88d6"/></symbol>
    <symbol id="npad" viewBox="0 0 24 24"><path d="M5 3h15l-1 19H3z" fill="#a9d8ee"/><path d="M6 2v3M9 2v3M12 2v3M15 2v3M18 2v3" stroke="#ddd"/><path d="M7 9h9M7 13h9M6 17h9" stroke="#4a7a98"/></symbol>
    <symbol id="snip" viewBox="0 0 24 24"><path d="M3 12C3 4 12 1 18 3s3 9-3 11H7z" fill="#f2e0e0" stroke="#d0343f" stroke-width="1.500"/><path d="M13 10l5 10M18 10l-5 10" stroke="#2b7fd0" stroke-width="1.500"/></symbol>
    <symbol id="weather" viewBox="0 0 24 24"><path d="M14 1a8 8 0 1 0 6 13A8 8 0 0 1 14 1z" fill="#f2b736" transform="rotate(20 12 10)"/><path d="M4 22a4 4 0 0 1 0-8 6 6 0 0 1 11-2 5 5 0 0 1 5 10z" fill="#8ec1ee"/></symbol>
    <symbol id="wifi" viewBox="0 0 24 24"><path d="M2 20A19 19 0 0 1 20 3M7 20A14 14 0 0 1 20 8M12 20a8 8 0 0 1 8-7" fill="none" stroke="#ddd" stroke-width="1.500" stroke-dasharray="3 1"/><path d="M17 20h4v-4" stroke="#ddd"/></symbol>
    <symbol id="spk" viewBox="0 0 24 24"><path d="M2 9h4l6-5v16l-6-5H2z" fill="none" stroke="#ddd" stroke-width="1.300"/><path d="M15 8q3 4 0 8M18 5q5 7 0 14" fill="none" stroke="#ddd" stroke-width="1.300"/></symbol>
    <symbol id="notif" viewBox="0 0 24 24"><path d="M3 3h18v16h-7l-2 3-2-3H3z" fill="#fff"/><path d="M7 8h10M7 12h10" stroke="#1c2327" stroke-width="1.300"/></symbol>
    <symbol id="lock" viewBox="0 0 16 16"><path d="M4.500 7V4.500a3.500 3.500 0 0 1 7 0V7" fill="none" stroke="#777" stroke-width="1.500"/><rect x="2.500" y="7" width="11" height="9" rx="1.500" fill="#777"/></symbol>
    <symbol id="cap" viewBox="0 0 16 16"><path d="M3 1l3 9 4-9 3 8-3 6-5-2z" fill="none" stroke="#444" stroke-width="1.500"/><circle cx="10" cy="11" r="3" fill="#fff" stroke="#444" stroke-width="1.300"/></symbol>
    <symbol id="wglobes" viewBox="0 0 16 16"><circle cx="8" cy="8" r="7" fill="#ddd" stroke="#666"/><path d="M1 6h14M1 10h14M8 1v14M4 2q-2 6 0 12M12 2q2 6 0 12" fill="none" stroke="#666" stroke-width=".7"/></symbol>
    <symbol id="bubble" viewBox="0 0 16 16"><circle cx="8" cy="7" r="7" fill="#777"/><path d="M6 12h5l-3 4z" fill="#777"/><path d="M4.500 7h1.500M7.500 7H9M10.500 7H12" stroke="#fff" stroke-width="1.300"/></symbol>
</svg>

<header class="titlebar">
    <svg class="applogo"><use href="#qgis"/></svg>
    <span class="wintitle">*Untitled Project — QGIS</span>
    <div class="winbtns">
        <svg viewBox="0 0 46 23"><path d="M18 10.500h10" stroke="#111"/></svg>
        <svg viewBox="0 0 46 23"><path d="M20.500 7.500v-2h7v7h-2M18.500 7.500h7v7h-7z" fill="none" stroke="#111"/></svg>
        <svg viewBox="0 0 46 23"><path d="M18 5.500l10 10M28 5.500l-10 10" stroke="#111"/></svg>
    </div>
</header>

<nav class="menubar">
    <span class="m-left">Pro<u>j</u>ect</span>
    <span class="m-left"><u>E</u>dit</span>
    <span class="m-left"><u>V</u>iew</span>
    <span class="m-left"><u>L</u>ayer</span>
    <span class="m-left"><u>S</u>ettings</span>
    <span class="m-left"><u>P</u>lugins</span>
    <span class="open">Vect<u>o</u>r</span>
    <span><u>R</u>aster</span>
    <span><u>D</u>atabase</span>
    <span><u>W</u>eb</span>
    <span><u>M</u>esh</span>
    <span>Pro<u>c</u>essing</span>
    <span><u>H</u>elp</span>
</nav>

<section class="toolbars">
    <div class="tbar">
        <i class="hd first"></i>
        <svg class="ic"><use href="#page"/></svg><svg class="ic"><use href="#folder"/></svg><svg class="ic"><use href="#save"/></svg><svg class="ic"><use href="#saveas"/></svg><svg class="ic"><use href="#layoutm"/></svg><svg class="ic"><use href="#styleman"/></svg>
        <i class="hd"></i>
        <span class="pressed"><svg class="ic"><use href="#hand"/></svg></span><svg class="ic"><use href="#pansel"/></svg>
        <i class="sk sk-r1"></i>
        <svg class="ic off"><use href="#zoomlast"/></svg><svg class="ic off"><use href="#newmap"/></svg><svg class="ic off"><use href="#map3d"/></svg><svg class="ic"><use href="#bmknew"/></svg><svg class="ic"><use href="#bmkshow"/></svg><svg class="ic"><use href="#clock"/></svg><svg class="ic"><use href="#refresh"/></svg>
        <i class="hd"></i>
        <svg class="ic"><use href="#identify"/></svg><svg class="ic"><use href="#abacus"/></svg><svg class="ic"><use href="#gear"/></svg><svg class="ic"><use href="#sigma"/></svg><svg class="ic"><use href="#table"/></svg><i class="dd"></i><svg class="ic"><use href="#ruler"/></svg><i class="dd"></i><svg class="ic"><use href="#note"/></svg><svg class="ic off"><use href="#playgear"/></svg><i class="dd dim"></i>
        <i class="hd"></i><i class="hd"></i>
        <svg class="ic"><use href="#osm"/></svg><svg class="ic"><use href="#mapedit"/></svg>
    </div>
    <div class="tbar">
        <i class="hd first"></i>
        <svg class="ic"><use href="#dsm"/></svg><svg class="ic"><use href="#gpkg"/></svg><svg class="ic"><use href="#vnew"/></svg><svg class="ic"><use href="#feather"/></svg><svg class="ic"><use href="#chip"/></svg><svg class="ic"><use href="#mesh"/></svg><svg class="ic"><use href="#meshv"/></svg>
        <i class="hd"></i>
        <i class="sk sk-r2"></i>
        <svg class="ic"><use href="#selbox"/></svg><i class="dd"></i><svg class="ic"><use href="#seldiag"/></svg><i class="dd"></i><svg class="ic"><use href="#seldel"/></svg><i class="dd"></i><svg class="ic"><use href="#selpin"/></svg><i class="dd"></i>
        <i class="hd"></i>
        <svg class="ic"><use href="#abc"/></svg><svg class="ic"><use href="#chart"/></svg>
        <i class="sep"></i>
        <svg class="ic"><use href="#abred"/></svg><svg class="ic"><use href="#abcred"/></svg>
        <i class="sep"></i>
        <svg class="ic off"><use href="#abg"/></svg><svg class="ic off"><use href="#abceye"/></svg><svg class="ic off"><use href="#abcmove"/></svg><svg class="ic off"><use href="#abcrot"/></svg><svg class="ic off"><use href="#abcedit"/></svg>
        <i class="hd"></i>
        <svg class="ic"><use href="#globep"/></svg><svg class="ic"><use href="#globez"/></svg><svg class="ic"><use href="#globeb"/></svg>
        <i class="hd"></i>
        <svg class="ic"><use href="#help"/></svg>
    </div>
    <div class="tbar">
        <i class="hd first"></i>
        <svg class="ic"><use href="#setsq"/></svg><svg class="ic"><use href="#bloba"/></svg><i class="dd dim"></i><svg class="ic"><use href="#blobr"/></svg><svg class="ic"><use href="#blobl"/></svg><svg class="ic"><use href="#blobh"/></svg><svg class="ic off2"><use href="#blobb"/></svg><svg class="ic off2"><use href="#blobt"/></svg>
        <i class="sk sk-r3"></i>
        <svg class="ic"><use href="#sciss"/></svg><svg class="ic off"><use href="#xc2"/></svg><svg class="ic off"><use href="#grid"/></svg><svg class="ic off"><use href="#nodes"/></svg>
        <i class="sk sk-r3b"></i>
        <i class="hd"></i>
        <svg class="ic"><use href="#magnet"/></svg><svg class="ic"><use href="#tnode"/></svg>
        <span class="snapbox"><i></i><i></i><i></i></span>
        <span class="spin num"><b>12</b><em></em></span>
        <span class="pxcombo">px<i class="dd dim"></i></span>
        <svg class="ic"><use href="#split"/></svg><svg class="ic"><use href="#blobg"/></svg><svg class="ic"><use href="#xc"/></svg><svg class="ic"><use href="#xc2"/></svg><i class="dd dim"></i><svg class="ic"><use href="#nodes"/></svg>
        <i class="hd"></i>
        <svg class="ic off2"><use href="#arc"/></svg><svg class="ic off2"><use href="#circ"/></svg><i class="dd dim"></i><svg class="ic off2"><use href="#ell"/></svg><i class="dd dim"></i><svg class="ic off2"><use href="#rc"/></svg><i class="dd dim"></i><svg class="ic off2"><use href="#pl"/></svg><i class="dd dim"></i>
        <i class="hd"></i>
        <svg class="ic"><use href="#trace"/></svg>
        <span class="oneclick">One Click to Open</span>
    </div>
    <div class="tbar">
        <i class="hd first"></i>
        <svg class="ic"><use href="#python"/></svg><svg class="ic"><use href="#proc"/></svg><svg class="ic"><use href="#earth"/></svg><i class="dd"></i><svg class="ic"><use href="#overlay"/></svg><svg class="ic"><use href="#xa"/></svg><svg class="ic"><use href="#plugin"/></svg><svg class="ic"><use href="#hammer"/></svg><svg class="ic"><use href="#undo"/></svg>
        <i class="sk sk-r4"></i>
        <svg class="ic"><use href="#lgreen"/></svg><svg class="ic"><use href="#transl"/></svg><svg class="ic"><use href="#dglobe"/></svg><svg class="ic"><use href="#colm"/></svg><svg class="ic"><use href="#xyz"/></svg><svg class="ic"><use href="#qfe"/></svg>
        <i class="sk sk-r4b"></i>
        <i class="hd"></i>
        <svg class="ic"><use href="#pages"/></svg><svg class="ic"><use href="#pinmap"/></svg><svg class="ic"><use href="#zd"/></svg><svg class="ic"><use href="#zds"/></svg><svg class="ic"><use href="#boxd"/></svg><i class="dd"></i><svg class="ic"><use href="#wglobe"/></svg><svg class="ic off2"><use href="#xy"/></svg><svg class="ic"><use href="#wrench"/></svg>
        <i class="sk sk-r4c"></i>
        <i class="hd"></i>
    </div>
    <div class="tbar">
        <i class="hd first"></i>
        <svg class="ic"><use href="#grid"/></svg><svg class="ic"><use href="#gsel"/></svg><i class="dd dim"></i><svg class="ic"><use href="#crosse"/></svg><svg class="ic"><use href="#gmesh"/></svg><i class="dd dim"></i>
        <i class="hd"></i>
        <svg class="ic"><use href="#labela"/></svg><i class="dd"></i><svg class="ic"><use href="#curs"/></svg><svg class="ic"><use href="#nbox"/></svg>
        <i class="sk sk-r5"></i>
        <svg class="ic"><use href="#boxel"/></svg><i class="dd"></i>
        <i class="hd"></i>
        <svg class="ic"><use href="#bar"/></svg><svg class="ic"><use href="#xhair"/></svg>
        <i class="sep wide"></i>
        <svg class="ic"><use href="#xhaird"/></svg><svg class="ic"><use href="#xhairp"/></svg><svg class="ic"><use href="#bgreen"/></svg><svg class="ic"><use href="#pathd"/></svg>
        <i class="sep"></i>
        <svg class="ic"><use href="#info"/></svg><svg class="ic"><use href="#wrench"/></svg>
    </div>
</section>

<main class="workspace">
    <aside class="dock">
        <div class="dock-title">
            <span>Layers</span>
            <span class="dock-btns"><i class="btn-float"></i><i class="btn-close"></i></span>
        </div>
        <div class="dock-tools">
            <svg><use href="#broom"/></svg><svg><use href="#addgrp"/></svg><svg><use href="#eye"/></svg><svg><use href="#funnel"/></svg><svg><use href="#expf"/></svg><i class="dd"></i><svg><use href="#expd"/></svg><svg><use href="#expu"/></svg><svg><use href="#rmlyr"/></svg>
        </div>
        <div class="layer-list">
            <div class="layer-row">
                <span class="check">✔</span>
                <span class="swatch"></span>
                <span class="layer-name">Polygon</span>
            </div>
        </div>
        <div class="dock-tabs">
            <span class="tab t-order">Layer Order</span>
            <span class="tab t-browser">Browser</span>
            <span class="tab t-layers active">Layers</span>
        </div>
    </aside>
    <div class="splitter"></div>
    <div class="canvas">
        <svg viewBox="263 239 1177 602">
            <g fill="#e8718d" stroke="#3c3c3c" stroke-width="1">
                <path d="M626.700 254.300L929 698.700 710.700 827 417 381z"/>
                <path fill="none" d="M521.700 318L559 372.300 600 430.700 640 488.300 677.700 542.700 720.700 604.300 761 662.700 798.700 716.700 827.300 758.300"/>
                <path fill="none" d="M663.700 309.300L453.700 435.700M705.300 370L491 493.300M745 428L531 554M782 482L567.700 610M821 540.700L610 674.300M860 597.700L651 736.700M899 655L684.700 787"/>
            </g>
        </svg>
    </div>
</main>

<footer class="statusbar">
    <label class="locator"><svg viewBox="0 0 16 16"><circle cx="6.500" cy="6.500" r="4.500" fill="none" stroke="#888" stroke-width="1.300"/><path d="M10 10l5 5" stroke="#888" stroke-width="1.300"/></svg>Type to locate (Ctrl+K)</label>
    <span class="message lbl">Update attribute fields with calculations and text operations</span>
    <span class="lbl l-coord">Coordinate</span>
    <span class="field coord">22.592344°, 88.408058°</span>
    <svg class="st-ic capture"><use href="#cap"/></svg>
    <span class="lbl l-scale">Scale</span>
    <span class="field scale"><b>1:549</b><i class="dd"></i></span>
    <svg class="st-ic lock"><use href="#lock"/></svg>
    <span class="lbl l-mag">Magnifier</span>
    <span class="spin mag"><b>100%</b><em></em></span>
    <span class="lbl l-rot">Rotation</span>
    <span class="spin rot"><b>0.0 °</b><em></em></span>
    <span class="check small">✔</span>
    <span class="lbl l-render">Render</span>
    <svg class="st-ic epsg-ic"><use href="#wglobes"/></svg>
    <span class="lbl l-epsg">EPSG:4326</span>
    <svg class="st-ic msg"><use href="#bubble"/></svg>
</footer>

<footer class="taskbar">
    <span class="tk sys"><svg><use href="#win"/></svg></span>
    <span class="tk sys"><svg><use href="#tsearch"/></svg></span>
    <span class="tk sys"><svg><use href="#cortana"/></svg></span>
    <span class="tk sys"><svg><use href="#tview"/></svg></span>
    <span class="tk"><svg><use href="#edge"/></svg></span>
    <span class="tk run"><svg><use href="#files"/></svg></span>
    <span class="tk"><svg><use href="#store"/></svg></span>
    <span class="tk"><svg><use href="#mail"/></svg></span>
    <span class="tk"><svg><use href="#brave"/></svg></span>
    <span class="tk run"><svg><use href="#chrome"/></svg></span>
    <span class="tk"><svg><use href="#word"/></svg></span>
    <span class="tk"><svg><use href="#excel"/></svg></span>
    <span class="tk run"><svg><use href="#vscode"/></svg></span>
    <span class="tk run current"><svg><use href="#qgis"/></svg></span>
    <span class="tk run"><svg><use href="#npad"/></svg></span>
    <span class="tk run"><svg><use href="#snip"/></svg></span>
    <div class="tray">
        <span class="tray-label">Software</span>
        <span class="chev">»</span>
        <span class="weather"><svg><use href="#weather"/></svg><b>1</b></span>
        <svg class="tr up" viewBox="0 0 16 16"><path d="M2 11l6-6 6 6" fill="none" stroke="#ddd" stroke-width="1.300"/></svg>
        <svg class="tr t-wifi"><use href="#wifi"/></svg>
        <svg class="tr t-spk"><use href="#spk"/></svg>
        <span class="lang">ENG</span>
        <span class="clock">9:13 PM</span>
        <svg class="tr note"><use href="#notif"/></svg>
    </div>
</footer>

<!-- open Vector menu lies over the toolbars -->
<div class="menu">
    <div class="mi"><span><u>G</u>eometry Comparator</span></div>
    <div class="mi"><span><u>H</u>uman Visibility Area</span></div>
    <div class="mi hot"><span><u>Q</u>uick Field Editor</span></div>
    <div class="mi"><svg class="mi-ic"><use href="#osm"/></svg><span>QuickOSM</span></div>
    <div class="mi"><span><u>A</u>nalysis Tools</span></div>
    <div class="mi"><span><u>G</u>eoprocessing Tools</span></div>
    <div class="mi"><span>G<u>e</u>ometry Tools</span></div>
    <div class="mi"><span><u>R</u>esearch Tools</span></div>
    <div class="mi"><span><u>D</u>ata Management Tools</span></div>
</div>
<div class="submenu">
    <svg class="mi-ic"><use href="#qfe"/></svg><span>Quick Field Editor</span>
</div>
<div class="mark mark-vector"></div>
<div class="mark mark-qfe"></div>
</body>
</html>
```

FILE: styles.css
```css
* {
    box-sizing: border-box;
}

body {
    margin: 0;
    width: 1440px;
    height: 900px;
    overflow: hidden;
    display: flex;
    flex-direction: column;
    position: relative;
    font-family: "Noto Sans", "Open Sans", sans-serif;
    font-size: 11px;
    color: #111;
    background-color: #f0f0f0;
}

i, em {
    font-style: normal;
}

.sprite {
    display: none;
}

/* text inside icons */
.ia { font: 13px "Liberation Sans", sans-serif; fill: #555; }
.ia2 { font: bold 20px "Liberation Sans", sans-serif; fill: #4f7fb5; }
.ii { font: italic bold 15px "Liberation Serif", serif; fill: #fff; }
.ii2 { font: italic bold 18px "Liberation Serif", serif; fill: #fff; }
.il { font: bold 8px "Liberation Sans", sans-serif; fill: #333; }
.ir { fill: #e01818; }
.iq { font: 15px "Liberation Sans", sans-serif; fill: #dfe8f2; }
.ib { font: bold 11px "Liberation Sans", sans-serif; fill: #111; }
.it { font: 10px "Liberation Serif", serif; fill: #555; }
.ix { font: bold 7px "Liberation Sans", sans-serif; fill: #333; }
.iy { font: bold 10px "Liberation Sans", sans-serif; fill: #bbb; }
.ie { font: bold 13px "Liberation Sans", sans-serif; fill: #6a3f8a; }
.io { font: bold 10px "Liberation Sans", sans-serif; fill: #fff; }

/* title bar */
.titlebar {
    flex: none;
    height: 23px;
    display: flex;
    align-items: center;
    background-color: #fff;
}

.applogo {
    width: 16px;
    height: 16px;
    margin: 0 5px 0 2px;
}

.wintitle {
    font-size: 11.2px;
}

.winbtns {
    margin-left: auto;
    display: flex;
    margin-right: 2px;
}

.winbtns svg {
    width: 46px;
    height: 23px;
}

/* menu bar */
.menubar {
    flex: none;
    height: 20px;
    display: flex;
    align-items: center;
    padding-left: 3px;
    font-size: 11.1px;
    background-color: #f0f0f0;
}

.menubar span {
    padding: 0 7px;
    line-height: 20px;
}

.menubar .m-left {
    padding: 0 7.2px 0 7px;
}

.menubar .open {
    margin: 0 2px 0 2.6px;
    padding: 0 4.5px 0 4px;
    background-color: #0078d7;
    color: #fff;
}

/* toolbars */
.toolbars {
    flex: none;
}

.tbar {
    height: 39px;
    display: flex;
    align-items: center;
    padding-left: 4px;
    position: relative;
    background: linear-gradient(#fbfbfb, #efefef);
    border-top: 1px solid #fff;
    border-bottom: 2px solid #b9b9b9;
}

.tbar:first-child {
    border-top: 1px solid #d0d0d0;
}

.tbar > * {
    flex: none;
}

.ic {
    width: 24px;
    height: 24px;
    margin: 0 4.5px;
}

.off {
    filter: grayscale(1) opacity(0.35);
}

.off2 {
    filter: opacity(0.55);
}

.hd {
    width: 6px;
    height: 21px;
    margin: 0 2.5px 0 8px;
    background: radial-gradient(circle, #b4b4b4 0.8px, transparent 1px) 0 0 / 3px 3px;
}

.hd.first {
    margin-left: 0;
}

.dd {
    width: 12px;
    height: 4px;
    flex: none;
    position: relative;
}

.dd::after {
    content: "";
    position: absolute;
    left: 2px;
    top: 0;
    border-style: solid;
    border-width: 4px 4px 0;
    border-color: #555 transparent transparent;
}

.dd.dim::after {
    border-top-color: #b5b5b5;
}

.sep {
    width: 1px;
    height: 28px;
    margin: 0 2.5px;
    background-color: #c8c8c8;
}

.sep.wide {
    margin: 0 4px;
}

.sk { height: 1px; }
.sk-r1 { width: 231px; }
.sk-r2 { width: 468.5px; }
.sk-r3 { width: 263px; }
.sk-r3b { width: 12.5px; }
.sk-r4 { width: 210px; }
.sk-r4b { width: 97.5px; }
.sk-r4c { width: 30px; }
.sk-r5 { width: 204px; }

.pressed {
    width: 33px;
    height: 31px;
    display: flex;
    align-items: center;
    background-color: #e4e4e4;
    border: 1px solid #b4b4b4;
    border-radius: 2px;
}

.pressed .ic {
    margin: 0 3.5px;
}

.snapbox {
    width: 32px;
    height: 31px;
    background-color: #e6e6e6;
    border: 1px solid #d0d0d0;
    border-radius: 2px;
    position: relative;
}

.snapbox i {
    position: absolute;
    width: 4px;
    height: 4px;
    border: 1px solid #bbb;
}

.snapbox i:nth-child(1) { left: 9px; top: 7px; }
.snapbox i:nth-child(2) { left: 19px; top: 10px; }
.snapbox i:nth-child(3) { left: 14px; top: 19px; }

.spin {
    height: 20px;
    display: flex;
    align-items: center;
    background-color: #fff;
    border: 1px solid #b4b4b4;
    border-radius: 2px;
}

.spin b {
    font-weight: normal;
    flex: 1;
    padding-left: 4px;
}

.spin em {
    width: 14px;
    height: 100%;
    border-left: 1px solid #c8c8c8;
    background: linear-gradient(#fff 45%, #ccc 45%, #ccc 55%, #fff 55%);
    position: relative;
}

.spin em::before,
.spin em::after {
    content: "";
    position: absolute;
    left: 3px;
    border-left: 4px solid transparent;
    border-right: 4px solid transparent;
}

.spin em::before {
    top: 3px;
    border-bottom: 4px solid #666;
}

.spin em::after {
    bottom: 3px;
    border-top: 4px solid #666;
}

.spin.num {
    width: 84px;
    color: #888;
    background-color: #ececec;
}

.pxcombo {
    width: 88px;
    height: 20px;
    margin-left: 2px;
    padding-left: 4px;
    display: flex;
    align-items: center;
    justify-content: space-between;
    color: #888;
    background-color: #f4f4f4;
    border: 1px solid #c4c4c4;
    border-radius: 2px;
}

.oneclick {
    position: absolute;
    left: 556px;
    top: 5px;
    font-size: 13.8px;
    font-weight: 700;
    color: #000;
    text-shadow: 0 0 2px #fff, 0 0 2px #fff;
}

/* dock + canvas */
.workspace {
    flex: 1;
    min-height: 0;
    display: flex;
}

.dock {
    width: 256px;
    flex: none;
    display: flex;
    flex-direction: column;
}

.dock-title {
    height: 20px;
    padding: 0 2px 2px 4px;
    display: flex;
    align-items: center;
    justify-content: space-between;
}

.dock-btns {
    display: flex;
    gap: 3px;
}

.dock-btns i {
    width: 11px;
    height: 11px;
    border: 1px solid #555;
    border-radius: 2px;
    position: relative;
}

.btn-float::after {
    content: "";
    position: absolute;
    left: 1px;
    top: 2px;
    width: 5px;
    height: 5px;
    border: 1px solid #555;
}

.btn-close::after {
    content: "×";
    position: absolute;
    left: 1px;
    top: -5px;
    font-size: 12px;
    font-weight: bold;
    color: #333;
}

.dock-tools {
    height: 31px;
    padding: 0 0 2px 8px;
    display: flex;
    align-items: center;
    gap: 9px;
}

.dock-tools svg {
    width: 16px;
    height: 16px;
    flex: none;
}

.dock-tools .dd {
    margin: 0 0 0 -7px;
    width: 10px;
}

.layer-list {
    flex: 1;
    min-height: 0;
    background-color: #fff;
    border: 1px solid #a0a0a0;
}

.layer-row {
    height: 17px;
    display: flex;
    align-items: center;
    background-color: #0d7ad8;
    color: #fff;
}

.check {
    width: 14px;
    height: 14px;
    flex: none;
    margin-left: 23px;
    background-color: #fff;
    border: 1px solid #666;
    color: #111;
    font-size: 11px;
    line-height: 12px;
    text-align: center;
    font-family: "DejaVu Sans", sans-serif;
}

.swatch {
    width: 15px;
    height: 15px;
    flex: none;
    margin-left: 7px;
    background-color: #e8718d;
    border: 1px solid #444;
}

.layer-name {
    margin-left: 6px;
    font-size: 11.2px;
    font-weight: 700;
    text-decoration: underline;
}

.dock-tabs {
    height: 25px;
    display: flex;
    align-items: flex-start;
    padding-top: 2px;
    letter-spacing: -0.3px;
}

.tab {
    height: 21px;
    text-align: center;
    line-height: 18px;
    background-color: #e4e4e4;
    border: 1px solid #c4c4c4;
    border-bottom-color: #b8b8b8;
}

.t-order { width: 82px; }
.t-browser { width: 63px; }
.t-layers { width: 56px; }

.tab.active {
    height: 23px;
    background-color: #f8f8f8;
    line-height: 22px;
    border-top: none;
    border-radius: 0 0 2px 2px;
}

.splitter {
    width: 6px;
    flex: none;
}

.canvas {
    flex: 1;
    min-width: 0;
    background-color: #fff;
    border: 1px solid #a8a8a8;
    border-top-color: #c8c8c8;
    border-right: none;
}

.canvas svg {
    display: block;
    width: 100%;
    height: 100%;
}

/* status bar */
.statusbar {
    flex: none;
    height: 28px;
    display: flex;
    align-items: center;
    white-space: nowrap;
    background-color: #f0f0f0;
}

.statusbar > * {
    flex: none;
}

.lbl {
    letter-spacing: -0.33px;
}

.locator {
    width: 200px;
    height: 22px;
    margin-left: 4px;
    padding-left: 8px;
    display: flex;
    align-items: center;
    gap: 6px;
    letter-spacing: -0.1px;
    color: #8a8a8a;
    background-color: #fff;
    border: 1px solid #c4c4c4;
    border-radius: 2px;
}

.locator svg {
    width: 14px;
    height: 14px;
}

.statusbar .message {
    flex: 1;
    margin-left: 7px;
}

.field {
    height: 22px;
    margin-left: 3px;
    padding-left: 6px;
    display: flex;
    align-items: center;
    background-color: #fff;
    border: 1px solid #c4c4c4;
    border-radius: 2px;
}

.coord { width: 136px; }

.st-ic {
    width: 16px;
    height: 16px;
}

.l-coord { width: 54px; }
.capture { margin-left: 4px; }
.l-scale { width: 26px; margin-left: 12px; }

.scale {
    width: 81px;
    padding-left: 4px;
    justify-content: space-between;
}

.scale b {
    font-weight: normal;
}

.scale .dd {
    width: 17px;
    height: 100%;
    border-left: 1px solid #c8c8c8;
}

.scale .dd::after {
    left: 4px;
    top: 8px;
}

.lock { margin-left: 10px; }
.l-mag { width: 45px; margin-left: 6px; }

.mag {
    width: 84px;
    height: 22px;
    margin-left: 3px;
}

.l-rot { width: 48px; margin-left: 8px; }

.rot {
    width: 84px;
    height: 22px;
    margin-left: 3px;
}

.check.small {
    margin-left: 7px;
    width: 13px;
    height: 13px;
}

.l-render { width: 36px; margin-left: 4px; }
.epsg-ic { margin-left: 16px; }
.l-epsg { width: 54px; }
.msg { margin-left: 23px; margin-right: 7px; }

/* task bar */
.taskbar {
    flex: none;
    height: 30px;
    display: flex;
    align-items: center;
    color: #e6e6e6;
    background-color: #1c2327;
}

.tk {
    width: 37px;
    height: 30px;
    flex: none;
    display: flex;
    align-items: center;
    justify-content: center;
    position: relative;
}

.tk.sys {
    width: 36.5px;
}

.tk svg {
    width: 20px;
    height: 20px;
}

.tk.run::after {
    content: "";
    position: absolute;
    left: 4px;
    right: 4px;
    bottom: 0;
    height: 2px;
    background-color: #76b9ed;
}

.tk.current {
    background-color: #3f4649;
}

.tk.current::after {
    left: 0;
    right: 0;
}

.tray {
    margin-left: auto;
    display: flex;
    align-items: center;
    height: 30px;
}

.tray-label { letter-spacing: -0.1px; }

.chev {
    width: 16px;
    margin: -8px 0 0 11px;
    font-size: 13px;
}

.weather {
    width: 26px;
    height: 26px;
    position: relative;
}

.weather svg {
    width: 26px;
    height: 26px;
}

.weather b {
    position: absolute;
    right: -1px;
    top: 1px;
    width: 13px;
    height: 13px;
    line-height: 13px;
    border-radius: 50%;
    font-size: 9px;
    text-align: center;
    color: #fff;
    background-color: #c42b1c;
}

.tr {
    width: 16px;
    height: 16px;
}

.tr.up { margin-left: 9px; }
.t-wifi { margin-left: 9px; }
.t-spk { margin-left: 7px; }

.lang { width: 24px; margin-left: 10px; }
.clock { width: 42px; margin-left: 15px; white-space: nowrap; }

.tr.note {
    margin: 0 24px 0 21px;
    width: 18px;
    height: 18px;
}

/* open menu */
.menu {
    position: absolute;
    left: 281px;
    top: 43px;
    width: 237px;
    height: 207px;
    font-size: 11.15px;
    background-color: #fff;
    border: 1px solid #a0a0a0;
    box-shadow: 3px 3px 3px rgba(0, 0, 0, 0.4);
}

.mi {
    height: 23px;
    padding: 0 0 2px 27px;
    display: flex;
    align-items: center;
    position: relative;
}

.mi::after {
    content: "";
    position: absolute;
    right: 4px;
    top: 7px;
    border-style: solid;
    border-width: 4px 0 4px 5px;
    border-color: transparent transparent transparent #555;
}

.mi-ic {
    position: absolute;
    left: 6px;
    top: 3px;
    width: 16px;
    height: 16px;
}

.mi.hot {
    background-color: #0374d0;
    outline: 1px solid #4fa6ea;
    outline-offset: -1px;
    color: #fff;
}

.mi.hot::after {
    border-left-color: #fff;
}

.submenu {
    position: absolute;
    left: 518px;
    top: 88px;
    width: 190px;
    height: 25px;
    padding-left: 27px;
    display: flex;
    align-items: center;
    font-size: 11.15px;
    color: #fff;
    background-color: #0374d0;
    outline: 1px solid #4fa6ea;
    outline-offset: -1px;
}

.submenu .mi-ic {
    top: 4px;
}

.mark {
    position: absolute;
    border: 3px solid #ec1c24;
}

.mark-vector {
    left: 278px;
    top: 20px;
    width: 48px;
    height: 26px;
}

.mark-qfe {
    left: 277px;
    top: 84px;
    width: 433px;
    height: 32px;
}
```
